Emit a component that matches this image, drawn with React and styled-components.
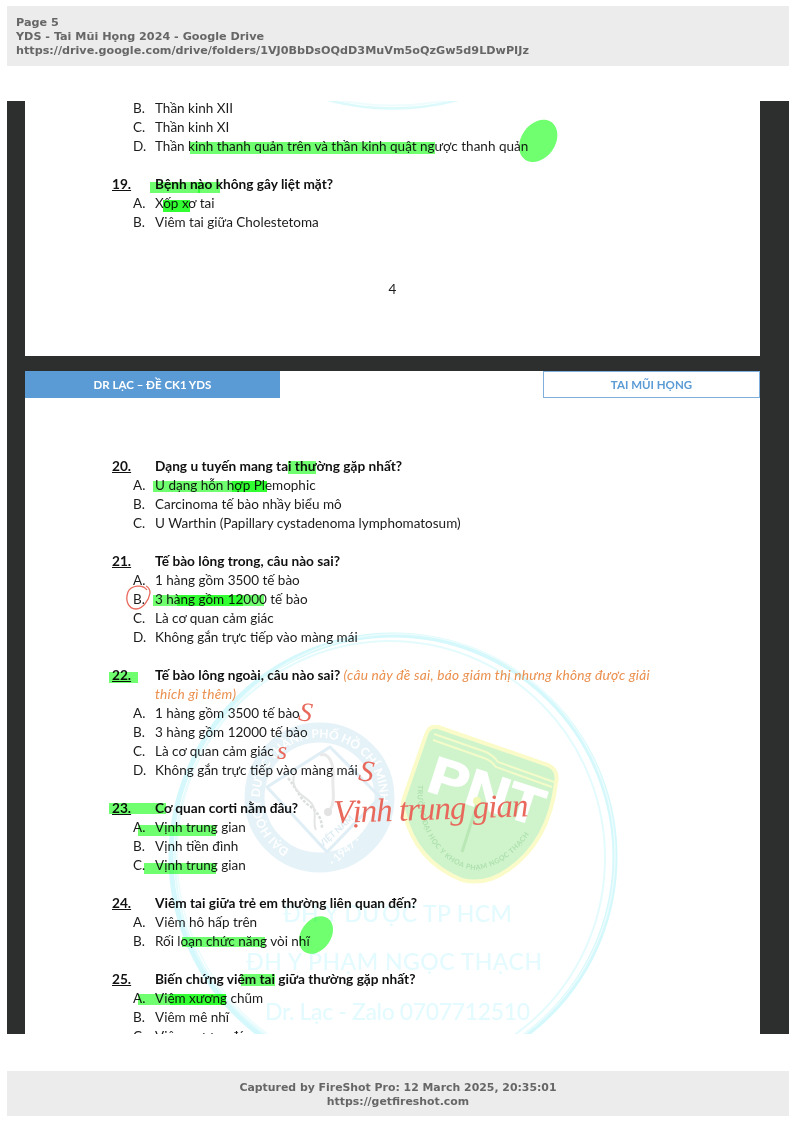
import styled, { createGlobalStyle } from "styled-components";

const INK = "#e8695c";
const HIGHLIGHT = "#6fff6f";
const PAGE_ONE_TOP = 98.5;
const PAGE_TWO_TOP = 371;
const PAGE_LEFT = 25;

const GlobalStyle = createGlobalStyle`
  html, body {
    margin: 0;
    padding: 0;
    background: #fff;
  }
`;

const Shot = styled.div`
  width: 796px;
  height: 1123px;
  padding-top: 6px;
  box-sizing: border-box;
  overflow: hidden;
  filter: blur(0.35px);
`;

const Banner = styled.div`
  margin: 0 7px;
  background: #ececec;
  color: #666;
  font-family: "DejaVu Sans", sans-serif;
  font-weight: 700;
  line-height: 14px;
  box-sizing: border-box;
`;

const TopBanner = styled(Banner)`
  height: 60px;
  padding: 10px 9px;
  font-size: 11.2px;
`;

const BottomBanner = styled(Banner)`
  height: 45px;
  padding: 10px 9px;
  margin-top: 37px;
  font-size: 10.9px;
  text-align: center;
`;

const Viewer = styled.div`
  margin: 35px 7px 0;
  height: 933px;
  background: #2d2f2e;
  padding: 0 29px 0 18px;
  overflow: hidden;
`;

const Scroller = styled.div`
  margin-top: -2.5px;
  display: flex;
  flex-direction: column;
  gap: 15px;
`;

const Page = styled.div`
  position: relative;
  background: #fff;
  height: ${(p) => p.$height}px;
  font-family: Lato, "Noto Sans", sans-serif;
  font-size: 13.5px;
  line-height: 19px;
  color: #1c1c1c;
`;

const Overlay = styled.svg`
  position: absolute;
  left: 0;
  top: 0;
  width: 100%;
  height: 100%;
`;

const InkOverlay = styled(Overlay)`
  pointer-events: none;
  mix-blend-mode: multiply;
`;

const PageBody = styled.div`
  position: relative;
  padding: ${(p) => p.$top}px 92px 0 87px;
`;

const PageHead = styled.div`
  position: relative;
  display: flex;
  justify-content: space-between;
  height: 27px;
  font-weight: 700;
  font-size: 11.5px;
  line-height: 27px;
  text-align: center;
`;

const HeadLeft = styled.div`
  width: 255px;
  background: #5b9bd5;
  color: #fff;
`;

const HeadRight = styled.div`
  width: 217px;
  box-sizing: border-box;
  border: 1px solid #7fb0dd;
  line-height: 25px;
  color: #5b9bd5;
`;

const Question = styled.div`
  display: grid;
  grid-template-columns: 43px 1fr;
  margin-top: 19px;
  font-size: 13.67px;
  font-weight: 700;
  color: #111;

  &:first-child {
    margin-top: 0;
  }
`;

const Num = styled.span`
  text-decoration: underline;
`;

const Note = styled.span`
  font-style: italic;
  font-weight: 400;
  letter-spacing: 0.27px;
  color: #ea8f4d;
`;

const Option = styled.div`
  display: grid;
  grid-template-columns: 22px 1fr;
  margin-left: 21px;
`;

const PageNumber = styled.div`
  margin-top: 48px;
  margin-left: -87px;
  margin-right: -92px;
  text-align: center;
`;

const Stroke = styled.div`
  position: absolute;
  left: ${(p) => p.$x}px;
  top: ${(p) => p.$y}px;
  width: ${(p) => p.$w}px;
  height: ${(p) => p.$h}px;
  background: ${HIGHLIGHT};
  mix-blend-mode: multiply;
`;

const Scrawl = styled.span`
  position: absolute;
  left: ${(p) => p.$x}px;
  top: ${(p) => p.$y}px;
  font-family: "Liberation Serif", serif;
  font-style: italic;
  font-size: ${(p) => p.$size}px;
  letter-spacing: ${(p) => p.$spacing || 0}px;
  line-height: 1;
  white-space: nowrap;
  color: ${INK};
  transform: rotate(${(p) => p.$tilt || 0}deg);
  transform-origin: left bottom;
`;

const pageOneStrokes = [
  [190, 141.5, 245, 12.5],
  [150, 182, 50, 11],
  [198, 182, 22, 11],
  [163, 200, 27, 12],
  [163, 200, 27, 12],
];

const pageTwoStrokes = [
  [288, 461, 28, 13],
  [153, 481, 114, 11],
  [232, 481, 35, 11],
  [153, 595, 111, 11],
  [177, 595, 66, 11],
  [109, 672, 29, 11],
  [109, 803, 57, 11],
  [138, 825, 78, 11],
  [144, 863, 72, 10.5],
  [182, 937, 83, 10],
  [241, 974, 34, 12],
  [138, 994, 88, 11],
  [170, 994, 56, 11],
];

const pageTwoScrawls = [
  { text: "S", x: 297, y: 698, size: 27, tilt: 8 },
  { text: "s", x: 277, y: 738, size: 26, tilt: 0 },
  { text: "S", x: 357, y: 755, size: 30, tilt: 8 },
  { text: "Vịnh trung gian", x: 334, y: 796, size: 33, tilt: -2, spacing: -1 },
];

function PageOneArc() {
  return (
    <Overlay viewBox={`${PAGE_LEFT} ${PAGE_ONE_TOP} 735 258`}>
      <path d="M322 98 Q392 118 464 98" fill="none" stroke="#dcf9fc" strokeWidth="2.5" />
      <path d="M330 98 Q392 112 456 98" fill="none" stroke="#eefcfd" strokeWidth="2" />
    </Overlay>
  );
}

function UniversityCrest() {
  return (
    <g>
      <circle cx="319.5" cy="797.5" r="65" fill="none" stroke="#e5f2f8" strokeWidth="20" />
      <path id="crest-arc" d="M289.5 849.5 A60 60 0 1 1 379.5 805.5" fill="none" />
      <text fontFamily="Lato, sans-serif" fontWeight="700" fontSize="12" fill="#fff">
        <textPath href="#crest-arc" textLength="255">ĐẠI HỌC Y DƯỢC THÀNH PHỐ HỒ CHÍ MINH</textPath>
      </text>
      <path d="M330 747 L267 787 L327 852 L380 797 Z" fill="none" stroke="#e0eef5" strokeWidth="3" strokeLinejoin="round" />
      <path d="M288 778 C298 790 300 800 310 806 C318 812 322 820 322 828" fill="none" stroke="#dcdfdf" strokeWidth="2.5" strokeDasharray="3 1.5" />
      <path d="M294 775 C290 792 306 796 312 804 C318 812 312 822 316 830" fill="none" stroke="#e3e5e5" strokeWidth="2" />
      <path d="M320 755 C328 752 334 762 333 777 C332 790 336 800 330 810" fill="none" stroke="#e9e9e9" strokeWidth="3" />
      <circle cx="328" cy="812" r="4" fill="#e3e3e3" />
      <text x="322" y="848" fontFamily="Lato, sans-serif" fontWeight="700" fontSize="9" fill="#dcebf3" transform="rotate(-42 322 848)">VIỆT NAM</text>
      <text x="333" y="866" fontFamily="Lato, sans-serif" fontWeight="700" fontSize="11" fill="#fff" transform="rotate(-42 333 866)">· 1947 ·</text>
    </g>
  );
}

function SchoolShield() {
  return (
    <g>
      <path
        d="M438 727 L548 765 Q559 770 556 783 C552 815 540 848 508 870 C494 880 478 884 462 880 C432 868 412 846 404 812 Q402 806 404 798 L426 735 Q429 725 438 727 Z"
        fill="#cff4cc"
        stroke="#fbfbca"
        strokeWidth="4"
      />
      <path d="M434 734 L486 752 Q494 756 498 762 L554 782" fill="none" stroke="#f3fbc8" strokeWidth="2" />
      <path d="M433 740 L484 758 Q492 761 496 767 L552 787" fill="none" stroke="#f3fbc8" strokeWidth="2" />
      <text
        x="425"
        y="790"
        fontFamily="Liberation Sans, sans-serif"
        fontWeight="700"
        fontSize="52"
        fill="#fff"
        stroke="#fff"
        strokeWidth="1.5"
        textLength="118"
        lengthAdjust="spacingAndGlyphs"
        transform="rotate(18 425 790)"
      >
        PNT
      </text>
      <circle cx="477" cy="801" r="4" fill="#eff8b4" />
      <path d="M477 805 L462 852" stroke="#b9e7b5" strokeWidth="3" />
      <path id="shield-arc" d="M418 785 C414 825 440 868 476 870 C510 866 538 832 546 795" fill="none" />
      <text fontFamily="Lato, sans-serif" fontWeight="700" fontSize="7" letterSpacing="0.5" fill="#aee0ae">
        <textPath href="#shield-arc">TRƯỜNG ĐẠI HỌC Y KHOA PHẠM NGỌC THẠCH</textPath>
      </text>
    </g>
  );
}

function PageTwoWatermark() {
  return (
    <Overlay viewBox={`${PAGE_LEFT} ${PAGE_TWO_TOP} 735 700`}>
      <ellipse cx="393" cy="857" rx="222" ry="222" fill="none" stroke="#d4f8fb" strokeWidth="5" />
      <ellipse cx="390" cy="858" rx="215" ry="217" fill="none" stroke="#e4fbfd" strokeWidth="2" />
      <ellipse cx="396" cy="855" rx="219" ry="221" fill="none" stroke="#ecfcfd" strokeWidth="1.5" />
      <UniversityCrest />
      <SchoolShield />
      <g fontFamily="Lato, sans-serif" fontWeight="500" fontSize="23" fill="#e3fbfe">
        <text x="283" y="922" textLength="229" lengthAdjust="spacing">ĐH Y DƯỢC TP HCM</text>
        <text x="246" y="970" textLength="296" lengthAdjust="spacing">ĐH Y PHẠM NGỌC THẠCH</text>
        <text x="265" y="1020" textLength="265" lengthAdjust="spacing">Dr. Lạc - Zalo 0707712510</text>
      </g>
    </Overlay>
  );
}

function PageTwoInk() {
  return (
    <InkOverlay viewBox={`${PAGE_LEFT} ${PAGE_TWO_TOP} 735 700`}>
      <ellipse cx="316" cy="935" rx="15" ry="20.5" transform="rotate(35 316 935)" fill={HIGHLIGHT} />
      <path
        d="M147 590 C143 584 131 585 128 592 C125 600 128 609 136 609 C143 609 149 600 150 593 C150 590 148 587 146 586"
        fill="none"
        stroke={INK}
        strokeWidth="1.3"
      />
    </InkOverlay>
  );
}

function PageOneInk() {
  return (
    <InkOverlay viewBox={`${PAGE_LEFT} ${PAGE_ONE_TOP} 735 258`}>
      <ellipse cx="538.5" cy="140.5" rx="17" ry="23" transform="rotate(35 538.5 140.5)" fill={HIGHLIGHT} />
    </InkOverlay>
  );
}

export default function App() {
  return (
    <>
      <GlobalStyle />
      <Shot>
        <TopBanner>
          <div>Page 5</div>
          <div>YDS - Tai Mũi Họng 2024 - Google Drive</div>
          <div>https://drive.google.com/drive/folders/1VJ0BbDsOQdD3MuVm5oQzGw5d9LDwPIJz</div>
        </TopBanner>

        <Viewer>
          <Scroller>
            <Page $height={257.5}>
              <PageOneArc />
              <PageBody $top={0}>
                <Option><span>B.</span><span>Thần kinh XII</span></Option>
                <Option><span>C.</span><span>Thần kinh XI</span></Option>
                <Option><span>D.</span><span>Thần kinh thanh quản trên và thần kinh quật ngược thanh quản</span></Option>
                <Question><Num>19.</Num><span>Bệnh nào không gây liệt mặt?</span></Question>
                <Option><span>A.</span><span>Xốp xơ tai</span></Option>
                <Option><span>B.</span><span>Viêm tai giữa Cholestetoma</span></Option>
                <PageNumber>4</PageNumber>
              </PageBody>
              {pageOneStrokes.map(([x, y, w, h], i) => (
                <Stroke key={i} $x={x - PAGE_LEFT} $y={y - PAGE_ONE_TOP} $w={w} $h={h} />
              ))}
              <PageOneInk />
            </Page>

            <Page $height={700}>
              <PageTwoWatermark />
              <PageHead>
                <HeadLeft>DR LẠC – ĐỀ CK1 YDS</HeadLeft>
                <HeadRight>TAI MŨI HỌNG</HeadRight>
              </PageHead>
              <PageBody $top={58.5}>
                <Question><Num>20.</Num><span>Dạng u tuyến mang tai thường gặp nhất?</span></Question>
                <Option><span>A.</span><span>U dạng hỗn hợp Plemophic</span></Option>
                <Option><span>B.</span><span>Carcinoma tế bào nhầy biểu mô</span></Option>
                <Option><span>C.</span><span>U Warthin (Papillary cystadenoma lymphomatosum)</span></Option>

                <Question><Num>21.</Num><span>Tế bào lông trong, câu nào sai?</span></Question>
                <Option><span>A.</span><span>1 hàng gồm 3500 tế bào</span></Option>
                <Option><span>B.</span><span>3 hàng gồm 12000 tế bào</span></Option>
                <Option><span>C.</span><span>Là cơ quan cảm giác</span></Option>
                <Option><span>D.</span><span>Không gắn trực tiếp vào màng mái</span></Option>

                <Question>
                  <Num>22.</Num>
                  <span>
                    Tế bào lông ngoài, câu nào sai? <Note>(câu này đề sai, báo giám thị nhưng không được giải thích gì thêm)</Note>
                  </span>
                </Question>
                <Option><span>A.</span><span>1 hàng gồm 3500 tế bào</span></Option>
                <Option><span>B.</span><span>3 hàng gồm 12000 tế bào</span></Option>
                <Option><span>C.</span><span>Là cơ quan cảm giác</span></Option>
                <Option><span>D.</span><span>Không gắn trực tiếp vào màng mái</span></Option>

                <Question><Num>23.</Num><span>Cơ quan corti nằm đâu?</span></Question>
                <Option><span>A.</span><span>Vịnh trung gian</span></Option>
                <Option><span>B.</span><span>Vịnh tiền đình</span></Option>
                <Option><span>C.</span><span>Vịnh trung gian</span></Option>

                <Question><Num>24.</Num><span>Viêm tai giữa trẻ em thường liên quan đến?</span></Question>
                <Option><span>A.</span><span>Viêm hô hấp trên</span></Option>
                <Option><span>B.</span><span>Rối loạn chức năng vòi nhĩ</span></Option>

                <Question><Num>25.</Num><span>Biến chứng viêm tai giữa thường gặp nhất?</span></Question>
                <Option><span>A.</span><span>Viêm xương chũm</span></Option>
                <Option><span>B.</span><span>Viêm mê nhĩ</span></Option>
                <Option><span>C.</span><span>Viêm xương đá</span></Option>
              </PageBody>
              {pageTwoStrokes.map(([x, y, w, h], i) => (
                <Stroke key={i} $x={x - PAGE_LEFT} $y={y - PAGE_TWO_TOP} $w={w} $h={h} />
              ))}
              <PageTwoInk />
              {pageTwoScrawls.map((s) => (
                <Scrawl
                  key={s.text + s.x}
                  $x={s.x - PAGE_LEFT}
                  $y={s.y - PAGE_TWO_TOP}
                  $size={s.size}
                  $tilt={s.tilt}
                  $spacing={s.spacing}
                >
                  {s.text}
                </Scrawl>
              ))}
            </Page>
          </Scroller>
        </Viewer>

        <BottomBanner>
          <div>Captured by FireShot Pro: 12 March 2025, 20:35:01</div>
          <div>https://getfireshot.com</div>
        </BottomBanner>
      </Shot>
    </>
  );
}
